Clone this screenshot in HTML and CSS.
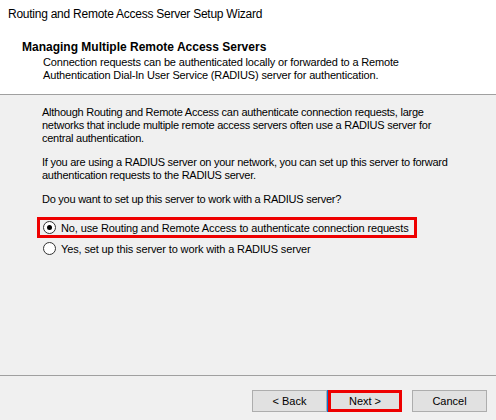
FILE: index.html
```html
<!DOCTYPE html>
<html>
<head>
<meta charset="utf-8">
<link rel="stylesheet" href="styles.css">
</head>
<body>
<div class="window">
  <div class="top">
    <div class="title">Routing and Remote Access Server Setup Wizard</div>
    <div class="heading">Managing Multiple Remote Access Servers</div>
    <div class="desc">Connection requests can be authenticated locally or forwarded to a Remote<br>Authentication Dial-In User Service (RADIUS) server for authentication.</div>
  </div>
  <div class="content">
    <p class="para">Although Routing and Remote Access can authenticate connection requests, large<br>networks that include multiple remote access servers often use a RADIUS server for<br>central authentication.</p>
    <p class="para">If you are using a RADIUS server on your network, you can set up this server to forward<br>authentication requests to the RADIUS server.</p>
    <p class="para">Do you want to set up this server to work with a RADIUS server?</p>
    <div class="options">
      <div class="option highlight"><span class="radio checked"></span><span class="label">No, use Routing and Remote Access to authenticate connection requests</span></div>
      <div class="option"><span class="radio"></span><span class="label">Yes, set up this server to work with a RADIUS server</span></div>
    </div>
  </div>
  <div class="footer">
    <button class="btn">&lt; Back</button>
    <button class="btn next">Next &gt;</button>
    <button class="btn cancel">Cancel</button>
  </div>
</div>
</body>
</html>
```
FILE: styles.css
```css
html, body {
  margin: 0;
  padding: 0;
}
body {
  background: #f0f0f0;
  font-family: "Liberation Sans", Arial, sans-serif;
  color: #000;
}
.window {
  width: 496px;
  height: 420px;
  display: flex;
  flex-direction: column;
}
.top {
  background: #fff;
  height: 94px;
  border-bottom: 1px solid #a0a0a0;
  box-sizing: content-box;
}
.title {
  font-size: 12px;
  line-height: 14px;
  letter-spacing: -0.25px;
  padding: 7px 0 0 8px;
}
.heading {
  font-size: 12px;
  font-weight: bold;
  line-height: 13px;
  margin: 20px 0 0 22px;
}
.desc {
  font-size: 11px;
  line-height: 13px;
  letter-spacing: -0.16px;
  margin: 2px 0 0 43px;
}
.content {
  flex: 1;
  padding: 11px 0 0 42px;
}
.para {
  font-size: 11px;
  line-height: 13px;
  letter-spacing: -0.25px;
  margin: 0 0 11px 0;
}
.options {
  margin: 1px 0 0 -5px;
  display: flex;
  flex-direction: column;
  align-items: flex-start;
}
.option {
  display: flex;
  align-items: center;
  height: 15px;
  border: 3px solid transparent;
  padding: 0 5px 0 3px;
  font-size: 11px;
  letter-spacing: -0.13px;
}
.option.highlight {
  border-color: #ee0000;
}
.radio {
  width: 11px;
  height: 11px;
  border: 1px solid #333;
  border-radius: 50%;
  background: #fff;
  box-sizing: content-box;
  display: flex;
  align-items: center;
  justify-content: center;
  margin-right: 5px;
}
.radio.checked::after {
  content: "";
  width: 5px;
  height: 5px;
  border-radius: 50%;
  background: #000;
}
.footer {
  height: 45px;
  border-top: 1px solid #a0a0a0;
  display: flex;
  align-items: flex-start;
  padding: 14px 9px 0 0;
  justify-content: flex-end;
  box-sizing: border-box;
}
.btn {
  width: 75px;
  height: 22px;
  background: #e1e1e1;
  border: 1px solid #adadad;
  font-family: "Liberation Sans", Arial, sans-serif;
  font-size: 11px;
  color: #000;
  padding: 0;
  margin: 0;
}
.next {
  margin-left: 1px;
  border: 3px solid #ee0000;
  box-shadow: -1px 0 0 #0078d7;
  width: 74px;
}
.cancel {
  margin-left: 10px;
}
```
